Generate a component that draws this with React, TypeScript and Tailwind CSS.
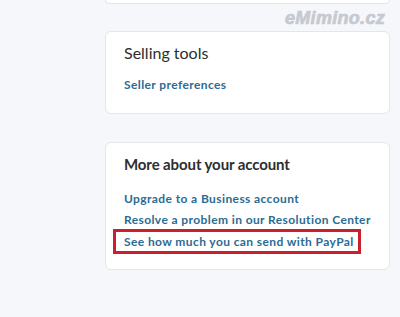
import React from "react";

export default function App() {
  const link = "text-[12px] font-bold text-[#2a6c93] leading-[20px] tracking-[0.4px]";
  return (
    <div
      className="relative w-[400px] h-[317px] overflow-hidden bg-[#f5f7fa] pl-[105px] pr-[10px]"
      style={{ fontFamily: "Lato, 'Open Sans', sans-serif" }}
    >
      <div className="h-[4px] bg-white border border-t-0 border-[#e3e6ea] rounded-b-[6px]" />
      <div className="mt-[27px] h-[83px] bg-white border border-[#e3e6ea] rounded-[6px] pl-[18px] pt-[10px]">
        <div className="text-[16px] text-[#2c2e2f] leading-[22px]">Selling tools</div>
        <div className={`${link} mt-[11px]`}>Seller preferences</div>
      </div>
      <div className="mt-[28px] h-[128px] bg-white border border-[#e3e6ea] rounded-[6px] pl-[18px] pt-[10px]">
        <div className="text-[15px] font-bold text-[#2c2e2f] leading-[22px] tracking-[-0.1px]">More about your account</div>
        <div className="mt-[14px] flex flex-col">
          <div className={link}>Upgrade to a Business account</div>
          <div className={`${link} mt-[1px]`}>Resolve a problem in our Resolution Center</div>
          <div className={`${link} mt-[2px]`}>
            <span className="relative inline-block">
              See how much you can send with PayPal
              <span className="absolute left-[-11px] right-[-7px] top-[-3px] bottom-[-2px] border-[3px] border-[#cc1f2e]" />
            </span>
          </div>
        </div>
      </div>
      <div
        className="absolute right-[15px] top-[5px] text-[18px] font-bold italic text-[#c6cad0] tracking-[0.3px] [-webkit-text-stroke:0.7px_#c6cad0]"
        style={{ fontFamily: "'Liberation Sans', Arial, sans-serif" }}
      >
        eMimino.cz
      </div>
    </div>
  );
}
